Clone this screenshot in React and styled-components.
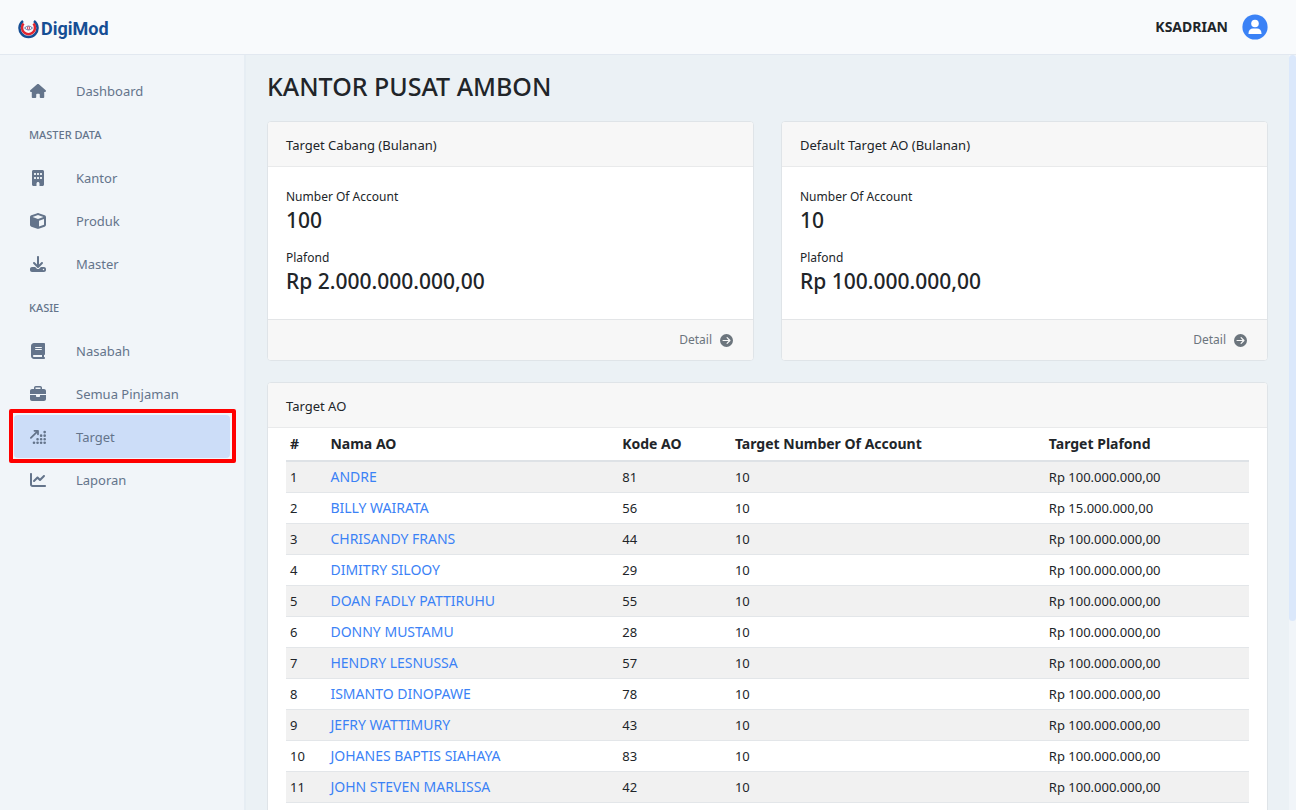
import React from 'react';
import styled, { createGlobalStyle } from 'styled-components';
import {
  FaHouse, FaBuilding, FaCube, FaDownload, FaBook, FaBriefcase,
  FaArrowUpRightDots, FaChartLine, FaCircleArrowRight,
} from 'react-icons/fa6';

const GlobalStyle = createGlobalStyle`
  *, *::before, *::after { box-sizing: border-box; }
  body {
    margin: 0;
    font-family: 'Noto Sans', 'Open Sans', sans-serif;
    font-size: 13px;
    line-height: 20px;
    color: #212529;
    background: #ebf1f5;
  }
  a { color: inherit; text-decoration: none; }
  h1, h2, p, dl, dd { margin: 0; }
`;

const Shell = styled.div`
  display: flex;
  flex-direction: column;
  height: 100vh;
`;

const TopBar = styled.header`
  flex: none;
  display: flex;
  align-items: center;
  justify-content: space-between;
  height: 55px;
  padding: 0 28px 0 18px;
  background: #f8fafc;
  border-bottom: 1px solid #e2e8f0;
`;

const Brand = styled.a`
  display: flex;
  align-items: center;
  gap: 2px;
  padding-top: 4px;
  font-family: Roboto, sans-serif;
  font-size: 18px;
  font-weight: 700;
  color: #164e94;
`;

const UserButton = styled.button`
  display: flex;
  align-items: center;
  gap: 14px;
  padding: 0;
  border: 0;
  background: none;
  font: inherit;
  font-size: 14px;
  font-weight: 700;
  color: inherit;
`;

const Body = styled.div`
  flex: 1;
  display: flex;
  min-height: 0;
`;

const Sidebar = styled.nav`
  flex: none;
  width: 246px;
  padding: 14px;
  background: #f1f5f9;
  border-right: 2px solid #e6edf3;
`;

const SectionLabel = styled.p`
  height: 44px;
  padding-left: 15px;
  font-size: 11px;
  font-weight: 500;
  line-height: 45px;
  color: #64748b;
`;

const NavItem = styled.a`
  position: relative;
  display: flex;
  align-items: center;
  gap: 30px;
  height: 43px;
  padding-left: 16px;
  border-radius: 4px;
  font-size: 13px;
  color: #64748b;
  background: ${({ $active }) => ($active ? '#ccddf8' : 'transparent')};

  svg { flex: none; width: 16px; height: 16px; }

  &::after {
    content: '';
    display: ${({ $active }) => ($active ? 'block' : 'none')};
    position: absolute;
    inset: -6px -6px -5px -5px;
    border: 4px solid #ff0000;
    border-radius: 2px;
  }
`;

const Main = styled.main`
  flex: 1;
  min-width: 0;
  padding: 13px 21px 24px 21px;
  overflow-y: auto;
  scrollbar-width: none;
`;

const ScrollRail = styled.div`
  flex: none;
  width: 7px;
  background: #f1f5f9;
`;

const ScrollThumb = styled.div`
  height: 75%;
  border-radius: 4px;
  background: #dbe8fb;
`;

const Title = styled.h1`
  margin-bottom: 17px;
  font-size: 25px;
  font-weight: 500;
  line-height: 36px;
`;

const Cards = styled.div`
  display: grid;
  grid-template-columns: 1fr 1fr;
  gap: 27px;
  margin-bottom: 21px;
`;

const Card = styled.section`
  border: 1px solid #dfe4e8;
  border-radius: 4px;
  background: #fff;
  overflow: hidden;
`;

const CardHeader = styled.h2`
  height: 45px;
  padding: 0 18px;
  border-bottom: 1px solid #e9eaeb;
  background: #f7f7f7;
  font-size: 13px;
  font-weight: 400;
  line-height: 46px;
`;

const Stats = styled.dl`
  display: grid;
  gap: 14px;
  padding: 20px 18px 24px;
`;

const StatLabel = styled.dt`
  font-size: 12px;
`;

const StatValue = styled.dd`
  font-size: 21px;
  font-weight: 500;
  line-height: 27px;
`;

const CardFooter = styled.footer`
  display: flex;
  justify-content: flex-end;
  height: 41px;
  padding: 0 20px;
  border-top: 1px solid #e3e5e7;
  background: #f7f7f7;
`;

const DetailLink = styled.a`
  display: flex;
  align-items: center;
  gap: 8px;
  font-size: 12px;
  color: #6c757d;

  svg { width: 13px; height: 13px; }
`;

const TableWrap = styled.div`
  padding: 0 18px 24px;
`;

const Table = styled.table`
  width: 100%;
  table-layout: fixed;
  border-collapse: separate;
  border-spacing: 0;
`;

const Th = styled.th`
  width: ${({ $width }) => $width};
  height: 34px;
  padding: 0 4px;
  border-bottom: 2px solid #dee2e6;
  text-align: left;
  font-size: 14px;
  font-weight: 700;
`;

const Row = styled.tr`
  &:nth-child(odd) { background: #f1f1f1; }
`;

const Td = styled.td`
  height: 31px;
  padding: 0 4px;
  border-bottom: 1px solid #e3e6e9;
`;

const NameLink = styled.a`
  font-size: 14px;
  color: #3b82f6;
`;

const Logo = () => (
  <svg width="21" height="20" viewBox="0 0 42 40" fill="none" aria-hidden="true">
    <path d="M10 4A18 18 0 1 0 32 4" stroke="#164e94" strokeWidth="5" />
    <path d="M11 9A13 13 0 1 0 31 9" stroke="#e0252f" strokeWidth="5" />
    <path d="M13 18Q21 10 29 18Q21 26 13 18Z" fill="#fff" stroke="#597bb0" strokeWidth="2" />
    <circle cx="21" cy="18" r="2.500" stroke="#d5485c" strokeWidth="2" />
  </svg>
);

const Avatar = () => (
  <svg width="26" height="26" viewBox="0 0 26 26" aria-hidden="true">
    <circle cx="13" cy="13" r="12.600" fill="#3b82f6" />
    <circle cx="13" cy="9.500" r="3.800" fill="#fff" />
    <path d="M6.500 20v-.8c0-2.700 2-4.700 4.500-4.700h4c2.500 0 4.500 2 4.500 4.700v.8z" fill="#fff" />
  </svg>
);

const NAV = [
  { label: 'Dashboard', icon: FaHouse },
  { section: 'MASTER DATA' },
  { label: 'Kantor', icon: FaBuilding },
  { label: 'Produk', icon: FaCube },
  { label: 'Master', icon: FaDownload },
  { section: 'KASIE' },
  { label: 'Nasabah', icon: FaBook },
  { label: 'Semua Pinjaman', icon: FaBriefcase },
  { label: 'Target', icon: FaArrowUpRightDots, active: true },
  { label: 'Laporan', icon: FaChartLine },
];

const TARGETS = [
  { title: 'Target Cabang (Bulanan)', accounts: '100', plafond: 'Rp 2.000.000.000,00' },
  { title: 'Default Target AO (Bulanan)', accounts: '10', plafond: 'Rp 100.000.000,00' },
];

const COLUMNS = [
  ['#', '4.2%'],
  ['Nama AO', '30.3%'],
  ['Kode AO', '11.7%'],
  ['Target Number Of Account', '32.6%'],
  ['Target Plafond', 'auto'],
];

const OFFICERS = [
  ['ANDRE', 81, 'Rp 100.000.000,00'],
  ['BILLY WAIRATA', 56, 'Rp 15.000.000,00'],
  ['CHRISANDY FRANS', 44, 'Rp 100.000.000,00'],
  ['DIMITRY SILOOY', 29, 'Rp 100.000.000,00'],
  ['DOAN FADLY PATTIRUHU', 55, 'Rp 100.000.000,00'],
  ['DONNY MUSTAMU', 28, 'Rp 100.000.000,00'],
  ['HENDRY LESNUSSA', 57, 'Rp 100.000.000,00'],
  ['ISMANTO DINOPAWE', 78, 'Rp 100.000.000,00'],
  ['JEFRY WATTIMURY', 43, 'Rp 100.000.000,00'],
  ['JOHANES BAPTIS SIAHAYA', 83, 'Rp 100.000.000,00'],
  ['JOHN STEVEN MARLISSA', 42, 'Rp 100.000.000,00'],
];

export default function App() {
  return (
    <Shell>
      <GlobalStyle />
      <TopBar>
        <Brand href="#"><Logo />DigiMod</Brand>
        <UserButton type="button">KSADRIAN<Avatar /></UserButton>
      </TopBar>
      <Body>
        <Sidebar>
          {NAV.map(({ section, label, icon: Icon, active }) => (section ? (
            <SectionLabel key={section}>{section}</SectionLabel>
          ) : (
            <NavItem key={label} href="#" $active={active} aria-current={active ? 'page' : undefined}>
              <Icon />{label}
            </NavItem>
          )))}
        </Sidebar>
        <Main>
          <Title>KANTOR PUSAT AMBON</Title>
          <Cards>
            {TARGETS.map((t) => (
              <Card key={t.title}>
                <CardHeader>{t.title}</CardHeader>
                <Stats>
                  <div>
                    <StatLabel>Number Of Account</StatLabel>
                    <StatValue>{t.accounts}</StatValue>
                  </div>
                  <div>
                    <StatLabel>Plafond</StatLabel>
                    <StatValue>{t.plafond}</StatValue>
                  </div>
                </Stats>
                <CardFooter>
                  <DetailLink href="#">Detail <FaCircleArrowRight /></DetailLink>
                </CardFooter>
              </Card>
            ))}
          </Cards>
          <Card>
            <CardHeader>Target AO</CardHeader>
            <TableWrap>
              <Table>
                <thead>
                  <tr>
                    {COLUMNS.map(([name, width]) => (
                      <Th key={name} scope="col" $width={width}>{name}</Th>
                    ))}
                  </tr>
                </thead>
                <tbody>
                  {OFFICERS.map(([name, code, plafond], i) => (
                    <Row key={name}>
                      <Td>{i + 1}</Td>
                      <Td><NameLink href="#">{name}</NameLink></Td>
                      <Td>{code}</Td>
                      <Td>10</Td>
                      <Td>{plafond}</Td>
                    </Row>
                  ))}
                </tbody>
              </Table>
            </TableWrap>
          </Card>
        </Main>
        <ScrollRail><ScrollThumb /></ScrollRail>
      </Body>
    </Shell>
  );
}
